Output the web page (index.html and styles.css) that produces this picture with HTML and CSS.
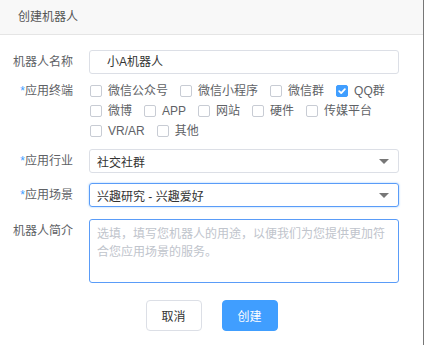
FILE: index.html
```html
<!DOCTYPE html>
<html lang="zh-CN">

<head>
    <meta charset="UTF-8">
    <meta name="viewport" content="width=device-width, initial-scale=1.0">
    <title>创建机器人</title>
    <link rel="stylesheet" href="styles.css">
</head>

<body>
    <div class="dialog">
        <div class="dialog-header">创建机器人</div>

        <form class="robot-form">
            <div class="row row-name">
                <label class="row-label">机器人名称</label>
                <div class="text-input">小A机器人</div>
            </div>

            <div class="row row-terminal">
                <label class="row-label"><span class="required">*</span>应用终端</label>
                <div class="check-group">
                    <span class="check-item"><i class="check-box"></i>微信公众号</span>
                    <span class="check-item"><i class="check-box"></i>微信小程序</span>
                    <span class="check-item"><i class="check-box"></i>微信群</span>
                    <span class="check-item"><i class="check-box checked"><svg width="10" height="10" viewBox="0 0 10 10"><path d="M2.2 5.2 L4.2 7.1 L7.9 3.2" fill="none" stroke="#fff" stroke-width="1.8" stroke-linecap="round" stroke-linejoin="round"/></svg></i>QQ群</span>
                    <span class="check-item"><i class="check-box"></i>微博</span>
                    <span class="check-item"><i class="check-box"></i>APP</span>
                    <span class="check-item"><i class="check-box"></i>网站</span>
                    <span class="check-item"><i class="check-box"></i>硬件</span>
                    <span class="check-item"><i class="check-box"></i>传媒平台</span>
                    <span class="check-item"><i class="check-box"></i>VR/AR</span>
                    <span class="check-item"><i class="check-box"></i>其他</span>
                </div>
            </div>

            <div class="row row-industry">
                <label class="row-label"><span class="required">*</span>应用行业</label>
                <div class="select-box">
                    <span>社交社群</span>
                    <i class="select-arrow"></i>
                </div>
            </div>

            <div class="row row-scene">
                <label class="row-label"><span class="required">*</span>应用场景</label>
                <div class="select-box focused">
                    <span>兴趣研究 - 兴趣爱好</span>
                    <i class="select-arrow"></i>
                </div>
            </div>

            <div class="row row-intro">
                <label class="row-label">机器人简介</label>
                <div class="text-area">选填，填写您机器人的用途，以便我们为您提供更加符合您应用场景的服务。</div>
            </div>

            <div class="dialog-footer">
                <button type="button" class="btn btn-cancel">取消</button>
                <button type="button" class="btn btn-create">创建</button>
            </div>
        </form>
    </div>
</body>

</html>
```

FILE: styles.css
```css
body {
    margin: 0;
    padding: 0;
    background-color: #fff;
    font-family: "Liberation Sans", "Noto Sans CJK SC", sans-serif;
    font-size: 12px;
}

.dialog {
    width: 423px;
    height: 345px;
    border-right: 1px solid #777;
    background-color: #fff;
}

.dialog-header {
    height: 34px;
    line-height: 34px;
    padding-left: 18px;
    background-color: #f8f8f8;
    border-bottom: 1px solid #e5e5e5;
    color: #555;
    font-size: 12px;
}

.robot-form {
    padding-top: 15px;
}

.row {
    display: flex;
    align-items: flex-start;
}

.row-label {
    width: 73px;
    margin-right: 16px;
    text-align: right;
    color: #606266;
    line-height: 24px;
    flex-shrink: 0;
}

.required {
    color: #409eff;
}

.row-name {
    margin-bottom: 7px;
}

.row-terminal {
    margin-bottom: 8px;
}

.row-terminal .row-label {
    line-height: 20px;
}

.row-industry {
    margin-bottom: 10px;
}

.row-scene {
    margin-bottom: 12px;
}

.text-input,
.select-box,
.text-area {
    box-sizing: border-box;
    width: 310px;
    border: 1px solid #dcdfe6;
    border-radius: 3px;
    color: #333;
}

.text-input {
    height: 24px;
    line-height: 22px;
    padding-left: 17px;
}

.check-group {
    width: 310px;
    padding-left: 1px;
    display: flex;
    flex-wrap: wrap;
    color: #606266;
}

.check-item {
    display: inline-flex;
    align-items: center;
    height: 20px;
    line-height: 20px;
    margin-right: 12px;
}

.check-box {
    box-sizing: border-box;
    width: 12px;
    height: 12px;
    margin-right: 6px;
    border: 1px solid #c8ccd4;
    border-radius: 2px;
    display: inline-flex;
    align-items: center;
    justify-content: center;
}

.check-box.checked {
    background-color: #409eff;
    border-color: #409eff;
}

.select-box {
    height: 24px;
    padding: 0 9px 0 7px;
    display: flex;
    align-items: center;
    justify-content: space-between;
}

.select-box.focused {
    border-color: #5a9cf8;
    box-shadow: 0 0 2px rgba(64, 158, 255, 0.6);
}

.select-arrow {
    width: 0;
    height: 0;
    border-left: 5px solid transparent;
    border-right: 5px solid transparent;
    border-top: 5px solid #777;
}

.text-area {
    height: 64px;
    padding: 5px 7px;
    line-height: 18px;
    border-color: #5a9cf8;
    color: #c0c4cc;
}

.dialog-footer {
    margin-top: 17px;
    display: flex;
    justify-content: center;
    gap: 20px;
}

.btn {
    width: 56px;
    height: 31px;
    border-radius: 4px;
    font-family: "Liberation Sans", "Noto Sans CJK SC", sans-serif;
    font-size: 12px;
    cursor: pointer;
}

.btn-cancel {
    background-color: #fff;
    border: 1px solid #dcdfe6;
    color: #333;
}

.btn-create {
    background-color: #409eff;
    border: 1px solid #409eff;
    color: #fff;
}
```
